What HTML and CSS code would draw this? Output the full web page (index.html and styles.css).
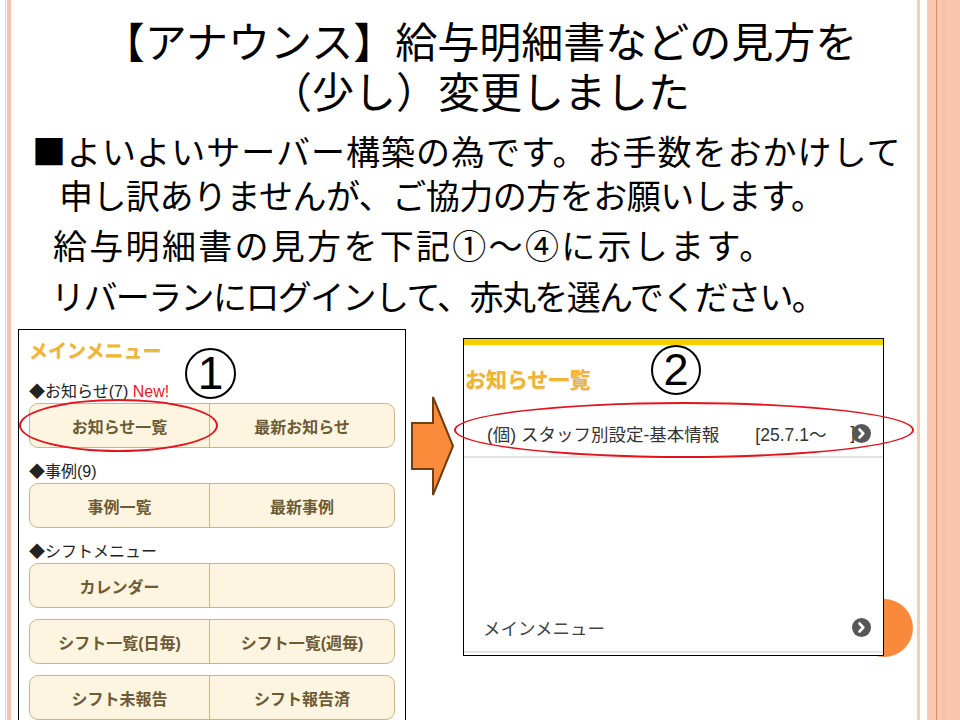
FILE: index.html
```html
<!DOCTYPE html>
<html lang="ja">
<head>
    <meta charset="UTF-8">
    <meta name="viewport" content="width=device-width, initial-scale=1.0">
    <title>給与明細書の見方</title>
    <link rel="stylesheet" href="styles.css">
</head>
<body>

<div class="slide">
    <div class="deco-circle"></div>

    <h1 class="title">
        <span class="title-line">【アナウンス】給与明細書などの見方を</span>
        <span class="title-line">（少し）変更しました</span>
    </h1>

    <div class="lead">
        <p class="line line-1">■よいよいサーバー構築の為です。お手数をおかけして</p>
        <p class="line line-2">申し訳ありませんが、ご協力の方をお願いします。</p>
        <p class="line line-3">給与明細書の見方を下記①～④に示します。</p>
        <p class="line line-4">リバーランにログインして、赤丸を選んでください。</p>
    </div>

    <div class="screens">
        <!-- step 1: main menu -->
        <div class="shot shot-menu">
            <div class="menu-title">メインメニュー</div>

            <div class="section first">◆お知らせ(7) <span class="new">New!</span></div>
            <div class="btn-row">
                <div class="btn">お知らせ一覧</div>
                <div class="btn">最新お知らせ</div>
            </div>

            <div class="section">◆事例(9)</div>
            <div class="btn-row">
                <div class="btn">事例一覧</div>
                <div class="btn">最新事例</div>
            </div>

            <div class="section">◆シフトメニュー</div>
            <div class="btn-row">
                <div class="btn">カレンダー</div>
                <div class="btn"></div>
            </div>
            <div class="btn-row spaced">
                <div class="btn">シフト一覧(日毎)</div>
                <div class="btn">シフト一覧(週毎)</div>
            </div>
            <div class="btn-row spaced">
                <div class="btn">シフト未報告</div>
                <div class="btn">シフト報告済</div>
            </div>

            <span class="step step-1">1</span>
            <span class="ring ring-1"></span>
        </div>

        <svg class="arrow" width="48" height="104" viewBox="0 0 48 104">
            <polygon points="2,28 23,28 23,2 43,51 23,100 23,74 2,74" fill="#fa8b3b" stroke="#6e3f12" stroke-width="2" stroke-linejoin="miter"/>
        </svg>

        <!-- step 2: notice list -->
        <div class="shot shot-list">
            <div class="topbar"></div>
            <div class="list-title">お知らせ一覧</div>
            <div class="item">
                <span class="item-name">(個) スタッフ別設定-基本情報</span>
                <span class="item-date">[25.7.1～</span>
                <span class="item-end">]</span>
                <svg class="go" width="19" height="19" viewBox="0 0 19 19">
                    <circle cx="9.5" cy="9.5" r="9.5" fill="#575757"/>
                    <polyline points="7.5,5.5 11.3,9.5 7.5,13.5" fill="none" stroke="#fff" stroke-width="2.6" stroke-linecap="round" stroke-linejoin="round"/>
                </svg>
            </div>
            <div class="spacer"></div>
            <div class="item item-menu">
                <span class="item-name">メインメニュー</span>
                <svg class="go" width="19" height="19" viewBox="0 0 19 19">
                    <circle cx="9.5" cy="9.5" r="9.5" fill="#575757"/>
                    <polyline points="7.5,5.5 11.3,9.5 7.5,13.5" fill="none" stroke="#fff" stroke-width="2.6" stroke-linecap="round" stroke-linejoin="round"/>
                </svg>
            </div>

            <span class="step step-2">2</span>
            <span class="ring ring-2"></span>
        </div>
    </div>
</div>

</body>
</html>
```

FILE: styles.css
```css
body {
    margin: 0;
    background-color: #fff;
    font-family: "Noto Sans CJK JP", sans-serif;
    color: #000;
}
.slide {
    position: relative;
    width: 960px;
    height: 720px;
    overflow: hidden;
    background: linear-gradient(to right,
        #fff 0 5px, #f8d0c1 5px 6px, #fff 6px 7px, #f5c3ae 7px 11px,
        #fff 11px 917px, #fbc9b5 917px 920px, #fff 920px 927px,
        #fcc7b1 927px 936px, #df8a60 936px 937px, #fac6b0 937px 942px,
        #f6bfa7 942px 945px, #fac6b0 945px 960px);
}
.deco-circle {
    position: absolute;
    left: 855px;
    top: 599px;
    width: 58px;
    height: 58px;
    border-radius: 50%;
    background-color: #fa8a3b;
}

/* heading + text */
.title {
    margin: 0;
    padding-top: 15px;
    font-size: 42px;
    font-weight: normal;
    text-align: center;
}
.title-line {
    display: block;
    height: 50px;
    line-height: 50px;
}
.lead {
    margin-top: 14px;
}
.line {
    margin: 0;
    font-size: 34px;
    white-space: nowrap;
}
.line-1 {
    line-height: 44px;
    padding-left: 32px;
    letter-spacing: 1px;
}
.line-2 {
    line-height: 44px;
    padding-left: 59px;
    letter-spacing: -0.5px;
}
.line-3 {
    line-height: 56px;
    padding-left: 53px;
    letter-spacing: 2.3px;
}
.line-4 {
    line-height: 46px;
    padding-left: 51px;
    letter-spacing: -1.6px;
}

/* screenshots */
.screens {
    display: flex;
    align-items: flex-start;
    margin-top: 10px;
    padding-left: 18px;
}
.shot {
    position: relative;
    box-sizing: border-box;
    border: 1px solid #000;
    background-color: #fff;
    font-family: "Liberation Sans", "Noto Sans CJK JP", sans-serif;
    flex-shrink: 0;
}
.shot-menu {
    width: 388px;
    padding: 10px 10px 20px 10px;
}
.menu-title {
    font-size: 19px;
    line-height: 24px;
    font-weight: bold;
    color: #f1b431;
    text-shadow: 0 1px 1px rgba(120, 80, 0, 0.25);
}
.section {
    margin-top: 14px;
    font-size: 16px;
    line-height: 20px;
    color: #222;
}
.section.first {
    margin-top: 18px;
}
.new {
    color: #e5182a;
}
.btn-row {
    display: grid;
    grid-template-columns: 179px 1fr;
    box-sizing: border-box;
    height: 45px;
    margin-top: 1px;
    border: 1px solid #ccb58b;
    border-radius: 9px;
    background-color: #fdf5df;
}
.btn-row.spaced {
    margin-top: 11px;
}
.btn {
    display: flex;
    align-items: center;
    justify-content: center;
    font-size: 16px;
    font-weight: bold;
    color: #6d5a37;
}
.btn + .btn {
    border-left: 1px solid #ccb58b;
}

.arrow {
    display: block;
    flex-shrink: 0;
    margin-left: 4px;
    margin-top: 66px;
}

.shot-list {
    display: flex;
    flex-direction: column;
    width: 421px;
    height: 318px;
    margin-left: 5px;
    margin-top: 9px;
    padding-bottom: 2px;
}
.topbar {
    height: 6px;
    background-color: #f6d100;
}
.list-title {
    display: flex;
    align-items: center;
    height: 65px;
    padding-left: 1px;
    font-size: 21px;
    font-weight: bold;
    color: #f1b42b;
    text-shadow: 0 1px 1px rgba(120, 80, 0, 0.25);
}
.item {
    display: flex;
    align-items: center;
    height: 46px;
    padding: 0 12px 0 23px;
    border-bottom: 2px solid #e4e4e4;
    font-size: 17.5px;
    color: #333;
}
.item-date {
    margin-left: 36px;
}
.item-end {
    margin-left: auto;
    margin-right: -3px;
}
.item-menu {
    height: 47px;
    padding-left: 19px;
    color: #444;
}
.item-menu .go {
    margin-left: auto;
}
.go {
    display: block;
    flex-shrink: 0;
}
.spacer {
    flex: 1;
}

/* annotations */
.step {
    position: absolute;
    box-sizing: border-box;
    border: 2px solid #000;
    border-radius: 50%;
    font-family: "Liberation Sans", sans-serif;
    text-align: center;
    color: #000;
}
.step-1 {
    left: 166px;
    top: 18px;
    width: 51px;
    height: 51px;
    font-size: 46px;
    line-height: 47px;
}
.step-2 {
    left: 187px;
    top: 6px;
    width: 50px;
    height: 50px;
    font-size: 45px;
    line-height: 46px;
}
.ring {
    position: absolute;
    box-sizing: border-box;
    border: 2.5px solid #e2141d;
    border-radius: 50%;
}
.ring-1 {
    left: 0;
    top: 69px;
    width: 199px;
    height: 53px;
}
.ring-2 {
    left: -10px;
    top: 63px;
    width: 460px;
    height: 56px;
}
```
